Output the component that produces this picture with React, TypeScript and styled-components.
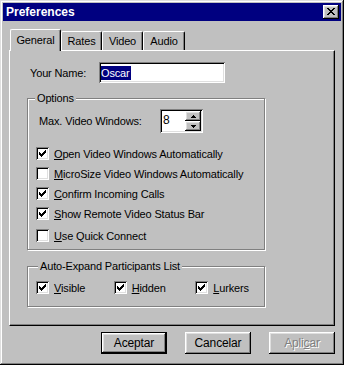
import styled, { createGlobalStyle } from "styled-components";

const GlobalStyle = createGlobalStyle`
  html, body {
    margin: 0;
    padding: 0;
    background: #c0c0c0;
  }
  body {
    font-family: "Liberation Sans", Arial, sans-serif;
    font-size: 11px;
    letter-spacing: -0.15px;
    color: #000;
  }
  * {
    box-sizing: border-box;
  }
`;

const raised =
  "inset -1px -1px #000, inset 1px 1px #fff, inset -2px -2px #808080, inset 2px 2px #dfdfdf";
const sunken =
  "inset 1px 1px #808080, inset -1px -1px #fff, inset 2px 2px #000, inset -2px -2px #dfdfdf";

const Window = styled.div`
  width: 344px;
  height: 365px;
  padding: 3px;
  background: #c0c0c0;
  box-shadow: inset -1px -1px #000, inset 1px 1px #dfdfdf,
    inset -2px -2px #808080, inset 2px 2px #fff;
  display: flex;
  flex-direction: column;
`;

const TitleBar = styled.div`
  height: 18px;
  background: #000080;
  display: flex;
  align-items: center;
  justify-content: space-between;
  padding: 0 2px 0 3px;
`;

const TitleText = styled.span`
  color: #fff;
  font-weight: bold;
  font-size: 12px;
  letter-spacing: 0;
`;

const CloseButton = styled.div`
  width: 16px;
  height: 14px;
  background: #c0c0c0;
  box-shadow: ${raised};
  display: flex;
  align-items: center;
  justify-content: center;
  padding-bottom: 1px;
`;

const Body = styled.div`
  padding: 8px 6px 0 6px;
  display: flex;
  flex-direction: column;
`;

const TabRow = styled.div`
  display: flex;
  align-items: flex-end;
  height: 21px;
  padding-left: 1px;
`;

const Tab = styled.div<{ $active?: boolean; $width: number }>`
  position: relative;
  z-index: ${(p) => (p.$active ? 1 : 0)};
  width: ${(p) => p.$width}px;
  height: ${(p) => (p.$active ? 22 : 19)}px;
  margin-bottom: ${(p) => (p.$active ? -1 : 0)}px;
  background: #c0c0c0;
  border-top: 1px solid #fff;
  border-left: 1px solid #fff;
  border-right: 1px solid #000;
  border-radius: 2px 2px 0 0;
  box-shadow: inset -1px 0 #808080;
  display: flex;
  align-items: center;
  justify-content: center;
  padding-bottom: ${(p) => (p.$active ? 2 : 0)}px;
`;

const Panel = styled.div`
  width: 326px;
  height: 276px;
  border-top: 1px solid #fff;
  border-left: 1px solid #fff;
  border-right: 1px solid #000;
  border-bottom: 1px solid #000;
  box-shadow: inset -1px -1px #808080;
  padding: 11px 0 0 17px;
  display: flex;
  flex-direction: column;
`;

const NameRow = styled.div`
  display: flex;
  align-items: center;
  height: 21px;
  padding-left: 3px;
`;

const FieldLabel = styled.span<{ $width: number }>`
  width: ${(p) => p.$width}px;
`;

const TextBox = styled.div`
  width: 126px;
  height: 21px;
  background: #fff;
  box-shadow: ${sunken};
  display: flex;
  align-items: center;
  padding-left: 2px;
`;

const Selection = styled.span`
  background: #000080;
  color: #fff;
  line-height: 14px;
  padding-right: 1px;
`;

const GroupBox = styled.div<{ $height: number; $top: number }>`
  width: 238px;
  height: ${(p) => p.$height}px;
  margin-top: ${(p) => p.$top}px;
  border: 1px solid #808080;
  box-shadow: inset 1px 1px #fff, 1px 1px #fff;
  display: flex;
  flex-direction: column;
`;

const Legend = styled.span<{ $indent: number }>`
  align-self: flex-start;
  margin: -7px 0 0 ${(p) => p.$indent}px;
  padding: 0 2px;
  background: #c0c0c0;
  height: 13px;
  line-height: 13px;
`;

const SpinRow = styled.div`
  display: flex;
  align-items: center;
  margin-top: 4px;
  padding-left: 11px;
  height: 24px;
`;

const SpinBox = styled.div`
  width: 43px;
  height: 24px;
  background: #fff;
  box-shadow: ${sunken};
  padding: 2px;
  display: flex;
`;

const SpinValue = styled.span`
  flex: 1;
  padding: 2px 0 0 1px;
  font-size: 12px;
`;

const SpinButtons = styled.div`
  width: 16px;
  display: flex;
  flex-direction: column;
`;

const SpinButton = styled.div`
  flex: 1;
  background: #c0c0c0;
  box-shadow: ${raised};
  display: flex;
  align-items: center;
  justify-content: center;
`;

const CheckList = styled.div`
  display: flex;
  flex-direction: column;
  gap: 7px;
  margin-top: 14px;
  padding-left: 8px;
`;

const CheckRow = styled.label<{ $width?: number; $extra?: number }>`
  display: flex;
  align-items: center;
  gap: 5px;
  height: 13px;
  width: ${(p) => (p.$width ? `${p.$width}px` : "auto")};
  margin-top: ${(p) => p.$extra || 0}px;
`;

const Box = styled.span`
  width: 13px;
  height: 13px;
  flex: none;
  background: #fff;
  box-shadow: ${sunken};
  display: flex;
  align-items: center;
  justify-content: center;
`;

const InlineRow = styled.div`
  display: flex;
  margin-top: 8px;
  padding-left: 8px;
`;

const ButtonRow = styled.div`
  display: flex;
  justify-content: flex-end;
  gap: 18px;
  margin-top: 6px;
`;

const Button = styled.div<{ $default?: boolean; $disabled?: boolean }>`
  width: 66px;
  height: 22px;
  background: #c0c0c0;
  border: ${(p) => (p.$default ? "1px solid #000" : "none")};
  box-shadow: ${raised};
  display: flex;
  align-items: center;
  justify-content: center;
  color: ${(p) => (p.$disabled ? "#808080" : "#000")};
  text-shadow: ${(p) => (p.$disabled ? "1px 1px #fff" : "none")};
  font-size: 12px;
`;

const Check = () => (
  <svg width="7" height="7" viewBox="0 0 7 7" shapeRendering="crispEdges">
    <path
      d="M6 0h1v1h-1zM5 1h2v1h-2zM0 2h1v1h-1zM4 2h3v1h-3zM0 3h2v1h-2zM3 3h3v1h-3zM0 4h5v1h-5zM1 5h3v1h-3zM2 6h1v1h-1z"
      fill="#000"
    />
  </svg>
);

const CloseGlyph = () => (
  <svg width="8" height="7" viewBox="0 0 8 7" shapeRendering="crispEdges">
    <path
      d="M0 0h2v1h-2zM6 0h2v1h-2zM1 1h2v1h-2zM5 1h2v1h-2zM2 2h4v1h-4zM3 3h2v1h-2zM2 4h4v1h-4zM1 5h2v1h-2zM5 5h2v1h-2zM0 6h2v1h-2zM6 6h2v1h-2z"
      fill="#000"
    />
  </svg>
);

const Arrow = ({ up }: { up?: boolean }) => (
  <svg width="5" height="3" viewBox="0 0 5 3" shapeRendering="crispEdges">
    <path
      d={up ? "M2 0h1v1h-1zM1 1h3v1h-3zM0 2h5v1h-5z" : "M0 0h5v1h-5zM1 1h3v1h-3zM2 2h1v1h-1z"}
      fill="#000"
    />
  </svg>
);

interface CheckItem {
  key: string;
  rest: string;
  checked: boolean;
  extra?: number;
}

const options: CheckItem[] = [
  { key: "O", rest: "pen Video Windows Automatically", checked: true },
  { key: "M", rest: "icroSize Video Windows Automatically", checked: false },
  { key: "C", rest: "onfirm Incoming Calls", checked: true },
  { key: "S", rest: "how Remote Video Status Bar", checked: true },
  { key: "U", rest: "se Quick Connect", checked: false, extra: 2 },
];

const expand = [
  { key: "V", rest: "isible", width: 79 },
  { key: "H", rest: "idden", width: 83 },
  { key: "L", rest: "urkers", width: 70 },
];

export default function App() {
  return (
    <>
      <GlobalStyle />
      <Window>
        <TitleBar>
          <TitleText>Preferences</TitleText>
          <CloseButton>
            <CloseGlyph />
          </CloseButton>
        </TitleBar>
        <Body>
          <TabRow>
            <Tab $active $width={51}>General</Tab>
            <Tab $width={41}>Rates</Tab>
            <Tab $width={41}>Video</Tab>
            <Tab $width={42}>Audio</Tab>
          </TabRow>
          <Panel>
            <NameRow>
              <FieldLabel $width={69}>Your Name:</FieldLabel>
              <TextBox>
                <Selection>Oscar</Selection>
              </TextBox>
            </NameRow>

            <GroupBox $height={152} $top={15}>
              <Legend $indent={7}>Options</Legend>
              <SpinRow>
                <FieldLabel $width={121}>Max. Video Windows:</FieldLabel>
                <SpinBox>
                  <SpinValue>8</SpinValue>
                  <SpinButtons>
                    <SpinButton>
                      <Arrow up />
                    </SpinButton>
                    <SpinButton>
                      <Arrow />
                    </SpinButton>
                  </SpinButtons>
                </SpinBox>
              </SpinRow>
              <CheckList>
                {options.map((o) => (
                  <CheckRow key={o.key} $extra={o.extra}>
                    <Box>{o.checked && <Check />}</Box>
                    <span>
                      <u>{o.key}</u>
                      {o.rest}
                    </span>
                  </CheckRow>
                ))}
              </CheckList>
            </GroupBox>

            <GroupBox $height={41} $top={16}>
              <Legend $indent={10}>Auto-Expand Participants List</Legend>
              <InlineRow>
                {expand.map((e) => (
                  <CheckRow key={e.key} $width={e.width}>
                    <Box>
                      <Check />
                    </Box>
                    <span>
                      <u>{e.key}</u>
                      {e.rest}
                    </span>
                  </CheckRow>
                ))}
              </InlineRow>
            </GroupBox>
          </Panel>
          <ButtonRow>
            <Button $default>Aceptar</Button>
            <Button>Cancelar</Button>
            <Button $disabled>
              <span>
                Apli<u>c</u>ar
              </span>
            </Button>
          </ButtonRow>
        </Body>
      </Window>
    </>
  );
}
